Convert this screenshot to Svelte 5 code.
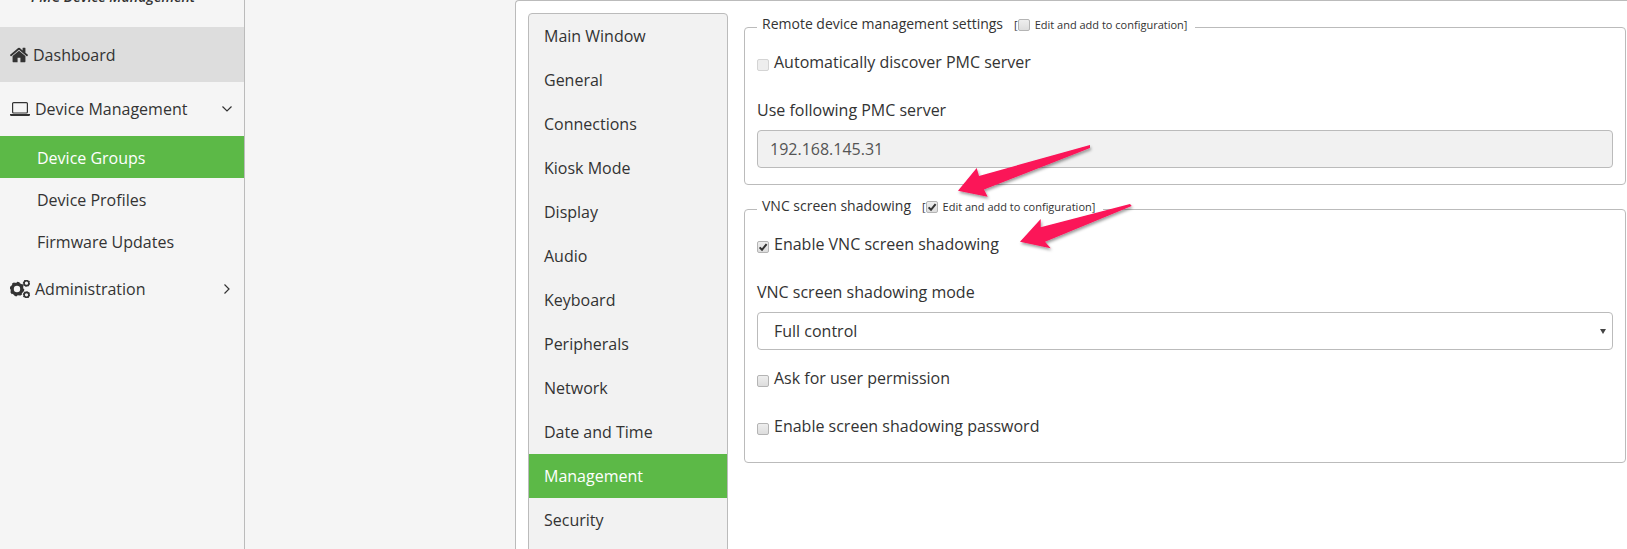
<script lang="ts">
	const tabs = [
		'Main Window',
		'General',
		'Connections',
		'Kiosk Mode',
		'Display',
		'Audio',
		'Keyboard',
		'Peripherals',
		'Network',
		'Date and Time',
		'Management',
		'Security'
	];
	const subItems = ['Device Groups', 'Device Profiles', 'Firmware Updates'];
</script>

{#snippet box(checked = false, disabled = false)}
	<span class="box" class:disabled>
		{#if checked}
			<svg viewBox="0 0 12 12" width="12" height="12" aria-hidden="true">
				<path d="M2.6 6.4 5 8.8 9.6 3.2" fill="none" stroke="#333" stroke-width="2" />
			</svg>
		{/if}
	</span>
{/snippet}

{#snippet gear(cx, cy, r)}
	<circle {cx} {cy} r={r * 0.72} fill="none" stroke="#333" stroke-width={r * 0.5} />
	<circle
		{cx}
		{cy}
		r={r * 0.92}
		fill="none"
		stroke="#333"
		stroke-width={r * 0.3}
		pathLength="16"
		stroke-dasharray="1 1"
	/>
{/snippet}

<div class="page">
	<aside class="sidebar">
		<div class="brand"><span>PMC Device Management</span></div>
		<div class="nav-row dashboard">
			<svg class="icon" viewBox="0 0 1792 1792" width="20" height="20" aria-hidden="true">
				<path
					fill="#333"
					d="M1472 992v480q0 26-19 45t-45 19h-384v-384h-256v384h-384q-26 0-45-19t-19-45v-480q0-1 .5-3t.5-3l575-474 575 474q1 2 1 6zm223-69l-62 74q-8 9-21 11h-3q-13 0-21-7l-692-577-692 577q-12 8-24 7-13-2-21-11l-62-74q-8-10-7-23.5t11-21.5l719-599q32-26 76-26t76 26l244 204v-195q0-14 9-23t23-9h192q14 0 23 9t9 23v408l219 182q10 8 11 21.5t-7 23.5z"
				/>
			</svg>
			<span>Dashboard</span>
		</div>
		<div class="nav-row">
			<svg class="icon" viewBox="0 0 20 14" width="20" height="14" aria-hidden="true">
				<rect x="2.6" y="0.6" width="14.8" height="10.4" rx="1" fill="none" stroke="#333" stroke-width="1.2" />
				<path d="M0 12h20v.8q0 1.2-1.2 1.2H1.2Q0 14 0 12.800z" fill="#333" />
			</svg>
			<span>Device Management</span>
			<svg class="chevron" viewBox="0 0 10 6" width="10" height="6" aria-hidden="true">
				<path d="M.5.5 5 5 9.500.5" fill="none" stroke="#333" stroke-width="1.200" />
			</svg>
		</div>
		{#each subItems as item, i}
			<div class="sub-item" class:active={i === 0}>{item}</div>
		{/each}
		<div class="nav-row">
			<svg class="icon" viewBox="0 0 20 18" width="20" height="18" aria-hidden="true">
				{@render gear(7, 9, 6.8)}
				{@render gear(16.500, 3.200, 3.400)}
				{@render gear(16.500, 14.800, 3.400)}
			</svg>
			<span>Administration</span>
			<svg class="chevron right" viewBox="0 0 6 10" width="6" height="10" aria-hidden="true">
				<path d="M.5.500 5 5 .5 9.500" fill="none" stroke="#333" stroke-width="1.200" />
			</svg>
		</div>
	</aside>

	<main class="content">
		<section class="card">
			<nav class="tabs">
				{#each tabs as tab}
					<div class="tab" class:active={tab === 'Management'}>{tab}</div>
				{/each}
			</nav>

			<div class="settings">
				<fieldset class="remote">
					<legend>
						<span class="legend-title">Remote device management settings</span>
						<span class="legend-edit">[{@render box()}<span>Edit and add to configuration]</span></span>
					</legend>
					<div class="check-row first">{@render box(false, true)}<span>Automatically discover PMC server</span></div>
					<div class="field-label">Use following PMC server</div>
					<input class="control readonly" type="text" value="192.168.145.31" disabled />
				</fieldset>

				<fieldset class="vnc">
					<legend>
						<span class="legend-title">VNC screen shadowing</span>
						<span class="legend-edit">[{@render box(true)}<span>Edit and add to configuration]</span></span>
					</legend>
					<div class="check-row first">{@render box(true)}<span>Enable VNC screen shadowing</span></div>
					<div class="field-label">VNC screen shadowing mode</div>
					<div class="select-wrap">
						<select class="control">
							<option>Full control</option>
						</select>
						<span class="caret"></span>
					</div>
					<div class="check-row ask">{@render box()}<span>Ask for user permission</span></div>
					<div class="check-row password">{@render box()}<span>Enable screen shadowing password</span></div>
				</fieldset>
			</div>
		</section>
	</main>

	<svg class="arrows" viewBox="0 0 1627 549" width="1627" height="549" aria-hidden="true">
		<defs>
			<filter id="arrow-shadow" x="-10%" y="-20%" width="120%" height="150%">
				<feDropShadow dx="1" dy="2" stdDeviation="1.500" flood-color="#000" flood-opacity="0.4" />
			</filter>
		</defs>
		<g fill="#fb1358" filter="url(#arrow-shadow)">
			<polygon points="958,190.700 976.700,168 979,176 1090,145 1090,148 984,189.500 987.700,196.700" />
			<polygon points="1020,241.700 1040.700,219 1040.700,227.300 1130,204 1131.700,206 1045,241.700 1050.700,248.300" />
		</g>
	</svg>
</div>

<style>
	:global(body) {
		overflow: hidden;
	}

	.page {
		display: flex;
		position: relative;
		height: 549px;
		overflow: hidden;
		background: #f5f5f5;
		color: #333;
		font-family: 'Open Sans', sans-serif;
		font-size: 16px;
	}

	.sidebar {
		flex: none;
		box-sizing: border-box;
		width: 245px;
		border-right: 1px solid #bbb;
	}

	.brand {
		height: 27px;
		padding-left: 31px;
		overflow: hidden;
	}

	.brand span {
		display: block;
		margin-top: -13px;
		font-size: 14.2px;
		font-weight: 600;
		font-style: italic;
		line-height: 19px;
		white-space: nowrap;
	}

	.nav-row {
		display: flex;
		align-items: center;
		height: 54px;
		padding-left: 10px;
	}

	.nav-row.dashboard {
		height: 55px;
		background: #ddd;
	}

	.nav-row.dashboard .icon {
		margin: 0 4px 0 -1px;
	}

	.icon {
		flex: none;
		margin-right: 5px;
	}

	.chevron {
		margin-left: auto;
		margin-right: 12px;
	}

	.chevron.right {
		margin-right: 14px;
	}

	.sub-item {
		height: 42px;
		padding-left: 37px;
		line-height: 44px;
	}

	.sub-item.active {
		background: #5cb947;
		color: #fff;
	}

	.content {
		flex: 1;
		min-width: 0;
		padding-left: 270px;
	}

	.card {
		display: flex;
		gap: 16px;
		box-sizing: border-box;
		height: 560px;
		padding: 12px 1px 0 12px;
		background: #fff;
		border: 1px solid #bbb;
		border-right: 0;
		border-radius: 4px 0 0 0;
	}

	.tabs {
		flex: none;
		box-sizing: border-box;
		width: 200px;
		background: #f2f2f2;
		border: 1px solid #bbb;
		border-radius: 4px 4px 0 0;
	}

	.tab {
		height: 44px;
		padding-left: 15px;
		line-height: 45px;
	}

	.tab.active {
		background: #5cb947;
		color: #fff;
	}

	.settings {
		flex: 1;
		min-width: 0;
	}

	fieldset {
		margin: 0;
		padding: 0 12px;
		min-width: 0;
		border: 1px solid #bbb;
		border-radius: 4px;
	}

	.remote {
		padding-bottom: 16px;
	}

	.vnc {
		margin-top: 10px;
		padding-bottom: 25px;
	}

	legend {
		display: flex;
		align-items: flex-start;
		gap: 11px;
		padding: 0 8px 0 5px;
		height: 28px;
		line-height: 22px;
		white-space: nowrap;
	}

	.legend-title {
		font-size: 14px;
	}

	.legend-edit {
		display: flex;
		align-items: center;
		height: 23px;
		font-size: 11px;
	}

	.legend-edit .box {
		margin-right: 5px;
	}

	.box {
		flex: none;
		display: inline-block;
		box-sizing: border-box;
		width: 12px;
		height: 12px;
		border: 1px solid #b4b4b4;
		border-radius: 2px;
		background: linear-gradient(#eee, #ddd);
	}

	.box svg {
		display: block;
		margin: -1px;
	}

	.box.disabled {
		border-color: #d4d4d4;
		background: #eee;
	}

	.check-row {
		display: flex;
		align-items: center;
		gap: 5px;
		height: 22px;
	}

	.check-row .box {
		margin-top: 6px;
	}

	.check-row.first {
		margin-top: 10px;
	}

	.check-row.ask {
		margin-top: 17px;
	}

	.check-row.password {
		margin-top: 26px;
	}

	.field-label {
		margin-top: 26px;
		height: 22px;
		line-height: 22px;
	}

	.control {
		display: block;
		box-sizing: border-box;
		width: 100%;
		height: 38px;
		margin-top: 9px;
		padding: 0 16px;
		border: 1px solid #bbb;
		border-radius: 4px;
		background: #fff;
		color: #333;
		font: inherit;
		appearance: none;
	}

	.control.readonly {
		padding: 0 12px;
		background: #f1f1f1;
		color: #555;
	}

	.select-wrap {
		position: relative;
	}

	.caret {
		position: absolute;
		top: 17px;
		right: 7px;
		border-left: 3px solid transparent;
		border-right: 3px solid transparent;
		border-top: 5px solid #444;
	}

	.arrows {
		position: absolute;
		top: 0;
		left: 0;
		pointer-events: none;
	}
</style>
